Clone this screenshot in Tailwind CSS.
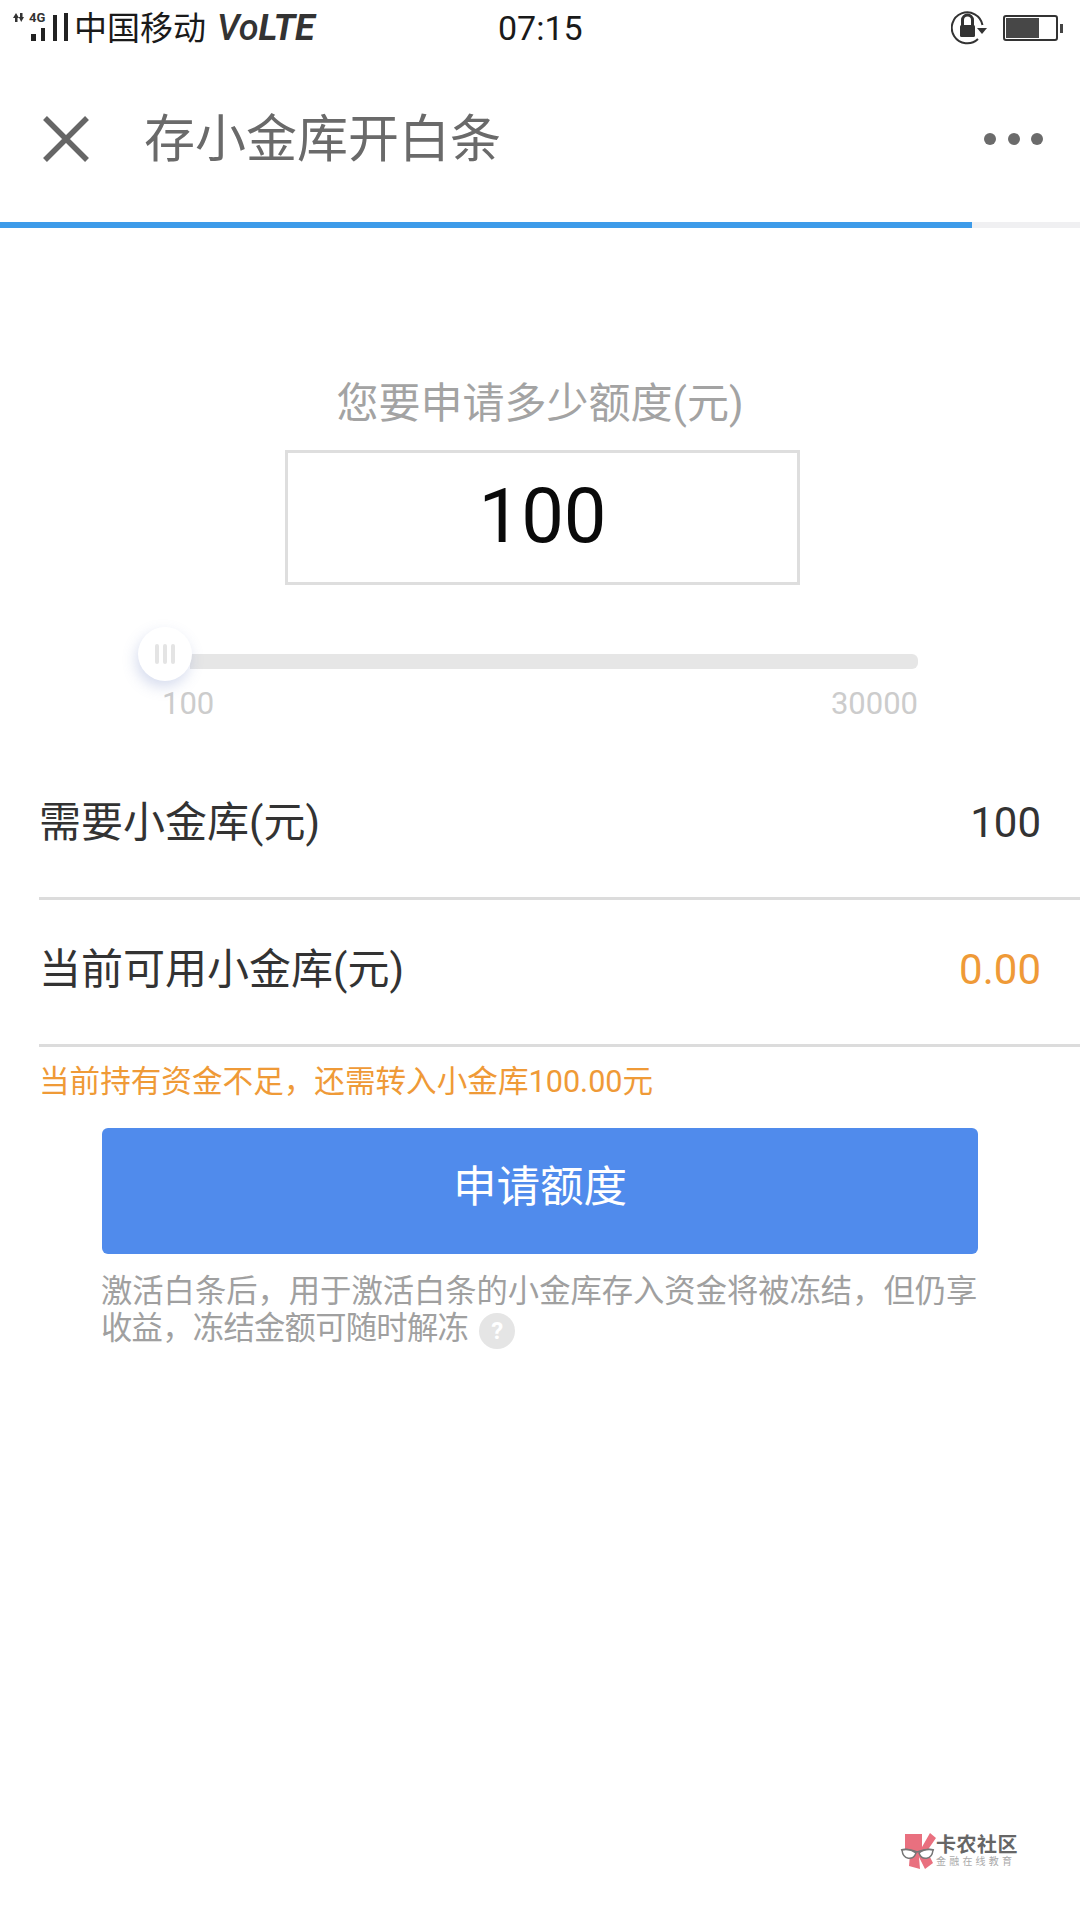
<!DOCTYPE html>
<html lang="zh-CN">
<head>
    <meta charset="UTF-8">
    <meta name="viewport" content="width=device-width, initial-scale=1.0">
    <title>存小金库开白条</title>
    <script src="https://cdn.jsdelivr.net/npm/@tailwindcss/browser@4"></script>
</head>
<body class="bg-white font-['Roboto','Noto_Sans_CJK_SC',sans-serif]">
    <div class="relative w-[1080px] h-[1920px] overflow-hidden bg-white">
        <!-- Status bar -->
        <div class="relative flex items-center h-[56px] pl-[12px] pr-[17px] text-[#1a1a1a]">
            <svg class="w-[58px] h-[44px] shrink-0" viewBox="0 0 58 44">
                <path d="M1 12 L4 7 L7 12 H5.5 V16 H3 V12Z M8 7 H10.5 V11 H12 L9.2 16 L6.8 11 H8Z" fill="#333"/>
                <text x="17" y="16" font-size="13" font-weight="700" fill="#333" font-family="Roboto">4G</text>
                <rect x="19" y="28" width="5" height="7" fill="#222"/>
                <rect x="29" y="22" width="4" height="13" fill="#222"/>
                <rect x="41" y="9" width="4" height="26" fill="#222"/>
                <rect x="52" y="7" width="4" height="28" fill="#222"/>
            </svg>
            <span class="ml-[4px] text-[33px] leading-none">中国移动</span>
            <span class="ml-[11px] text-[36px] leading-none italic font-bold text-[#333]"><span class="font-medium">Vo</span>LTE</span>
            <span class="absolute left-[498px] top-[11px] text-[34px] leading-[34px]">07:15</span>
            <div class="ml-auto flex items-center gap-[15px]">
                <svg class="w-[37px] h-[36px]" viewBox="0 0 37 36">
                    <path d="M31.5 15 A15.5 15.5 0 1 0 27 29" fill="none" stroke="#333" stroke-width="2"/>
                    <path d="M11.5 16 V10 A5 5 0 0 1 21.5 10 V16" fill="none" stroke="#333" stroke-width="3"/>
                    <rect x="9" y="15" width="15" height="12" rx="1.5" fill="#333"/>
                    <path d="M26 18 H36 L31 24Z" fill="#333"/>
                </svg>
                <div class="flex items-center">
                    <div class="w-[55px] h-[26px] border-2 border-[#333] rounded-[3px] p-[1px]">
                        <div class="w-[33px] h-full bg-[#474747]"></div>
                    </div>
                    <div class="ml-[2px] w-[3px] h-[9px] bg-[#444]"></div>
                </div>
            </div>
        </div>

        <!-- Nav -->
        <div class="flex items-center h-[166px] pl-[43px] pr-[37px]">
            <svg class="w-[46px] h-[46px] shrink-0" viewBox="0 0 46 46">
                <path d="M2 2 L44 44 M44 2 L2 44" stroke="#666" stroke-width="5.5" fill="none"/>
            </svg>
            <h1 class="ml-[55px] text-[51px] leading-none text-[#6a6a6a] font-normal">存小金库开白条</h1>
            <div class="ml-auto flex gap-[11.5px]">
                <span class="w-[12px] h-[12px] rounded-full bg-[#6b6b6b]"></span>
                <span class="w-[12px] h-[12px] rounded-full bg-[#6b6b6b]"></span>
                <span class="w-[12px] h-[12px] rounded-full bg-[#6b6b6b]"></span>
            </div>
        </div>

        <!-- Progress -->
        <div class="h-[6px] bg-[#f0f0f2]">
            <div class="w-[972px] h-full bg-[#3d9be9]"></div>
        </div>

        <!-- Amount -->
        <p class="mt-[152px] text-center text-[42px] leading-[48px] text-[#a3a3a3]">您要申请多少额度(元)</p>
        <div class="mt-[22px] ml-[285px] w-[515px] h-[135px] border-[3px] border-[#dedede] flex items-center justify-center pb-[4px] text-[76px] leading-none text-[#0a0a0a]">100</div>

        <!-- Slider -->
        <div class="relative mt-[69px] ml-[190px] w-[728px] h-[15px] rounded-r-[6px] bg-[#e6e6e6]">
            <div class="absolute left-[-52px] top-[-27px] w-[54px] h-[54px] rounded-full bg-white shadow-[-2px_6px_14px_rgba(120,140,200,0.3)] flex items-center justify-center gap-[4px]">
                <span class="w-[4px] h-[20px] rounded-full bg-[#e4e4e4]"></span>
                <span class="w-[4px] h-[20px] rounded-full bg-[#e4e4e4]"></span>
                <span class="w-[4px] h-[20px] rounded-full bg-[#e4e4e4]"></span>
            </div>
        </div>
        <div class="flex justify-between ml-[162px] w-[756px] mt-[18px] text-[31px] leading-[34px] text-[#cccccc]">
            <span>100</span>
            <span>30000</span>
        </div>

        <!-- Rows -->
        <div class="mt-[31px] ml-[39px]">
            <div class="flex items-center justify-between h-[148px] pr-[39px] pb-[4px] border-b-[3px] border-[#dcdcdc] text-[42px] leading-none text-[#333]">
                <span>需要小金库(元)</span>
                <span>100</span>
            </div>
            <div class="flex items-center justify-between h-[147px] pr-[39px] pb-[4px] border-b-[3px] border-[#dcdcdc] text-[42px] leading-none text-[#333]">
                <span>当前可用小金库(元)</span>
                <span class="text-[#ef9a37]">0.00</span>
            </div>
        </div>

        <p class="mt-[17px] ml-[39px] text-[30.6px] leading-[36px] text-[#ef9a37]">当前持有资金不足，还需转入小金库100.00元</p>

        <!-- Button -->
        <div class="mt-[28px] ml-[102px] w-[876px] h-[126px] rounded-[6px] bg-[#508bec] flex items-center justify-center text-[43.5px] leading-none text-white pb-[6px]">申请额度</div>

        <!-- Note -->
        <p class="mt-[19px] ml-[101px] w-[880px] text-[31.3px] leading-[37px] text-[#a0a0a0]">激活白条后，用于激活白条的小金库存入资金将被冻结，但仍享<br><span class="tracking-[-0.7px]">收益，冻结金额可随时解冻</span><span class="inline-flex align-middle ml-[11px] w-[36px] h-[36px] rounded-full bg-[#e5e5e5] items-center justify-center text-[24px] leading-none font-bold text-white">?</span></p>

        <!-- Watermark -->
        <div class="absolute left-[900px] top-[1830px] flex items-center">
            <svg class="w-[36px] h-[42px]" viewBox="0 0 36 42">
                <path d="M5 4 H22 V17 L30 3 L36 8 L27 21 L33 33 L25 39 L19 27 L20 39 L9 36 L10 24 L5 22Z" fill="#e9707f"/>
                <path d="M1 20 C6 18 12 20 17 22 C22 20 28 18 34 20" fill="none" stroke="#777" stroke-width="1.5"/>
                <path d="M2 20 C3 30 13 31 16 23 C12 20 7 19 2 20Z M19 23 C22 31 32 30 33 20 C28 19 23 20 19 23Z" fill="#fff" stroke="#777" stroke-width="1.5"/>
            </svg>
            <div class="flex flex-col">
                <span class="text-[20px] leading-[22px] font-bold text-[#666] tracking-[0.5px]">卡农社区</span>
                <span class="text-[10px] leading-[12px] text-[#aaa] tracking-[3.2px]">金融在线教育</span>
            </div>
        </div>
    </div>
</body>
</html>
